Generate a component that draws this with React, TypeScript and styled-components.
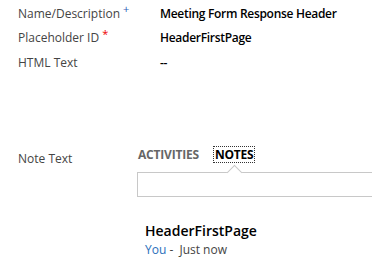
import React from "react";
import styled, { createGlobalStyle } from "styled-components";

const GlobalStyle = createGlobalStyle`
  html, body {
    margin: 0;
    padding: 0;
    background: #fff;
  }
  body {
    font-family: "Segoe UI", "Open Sans", "Liberation Sans", sans-serif;
    font-size: 12px;
    color: #444;
  }
`;

const fields = [
  { label: "Name/Description", mark: "+", value: "Meeting Form Response Header" },
  { label: "Placeholder ID", mark: "*", value: "HeaderFirstPage" },
  { label: "HTML Text", mark: "", value: "--" },
];

const App = () => {
  return (
    <Page>
      <GlobalStyle />
      <Fields>
        {fields.map((f) => (
          <Row key={f.label}>
            <Label>
              {f.label}
              {f.mark && <Mark required={f.mark === "*"}>{f.mark}</Mark>}
            </Label>
            <Value>{f.value}</Value>
          </Row>
        ))}
      </Fields>

      <NoteRow>
        <NoteLabel>Note Text</NoteLabel>
        <NotePanel>
          <Tabs>
            <Tab>ACTIVITIES</Tab>
            <Tab active>NOTES</Tab>
          </Tabs>
          <InputBox>
            <Notch />
          </InputBox>
          <NoteItem>
            <NoteTitle>HeaderFirstPage</NoteTitle>
            <NoteMeta>
              <Author>You</Author> - <span>Just now</span>
            </NoteMeta>
          </NoteItem>
        </NotePanel>
      </NoteRow>
    </Page>
  );
};

const Page = styled.div`
  width: 372px;
  height: 259px;
  overflow: hidden;
  padding: 1px 0 0 18px;
  box-sizing: border-box;
`;

const Fields = styled.div`
  display: flex;
  flex-direction: column;
`;

const Row = styled.div`
  display: flex;
  align-items: center;
  height: 24.5px;
`;

const Label = styled.div`
  width: 142px;
  flex-shrink: 0;
  color: #444;
  font-size: 12px;
  white-space: nowrap;
`;

const NoteLabel = styled(Label)`
  padding-top: 4px;
`;

const Mark = styled.sup<{ required?: boolean }>`
  color: ${(p) => (p.required ? "#e00" : "#2b5bb5")};
  font-size: 11px;
  margin-left: 3px;
  position: relative;
  top: ${(p) => (p.required ? "-1px" : "-2px")};
  vertical-align: top;
  line-height: 1;
`;

const Value = styled.div`
  font-weight: 600;
  color: #000;
  font-size: 12px;
  letter-spacing: -0.3px;
  white-space: nowrap;
`;

const NoteRow = styled.div`
  display: flex;
  margin-top: 71px;
`;

const NotePanel = styled.div`
  display: flex;
  flex-direction: column;
  flex: 1;
  margin-left: -23px;
`;

const Tabs = styled.div`
  display: flex;
  gap: 14px;
  height: 18px;
  align-items: center;
`;

const Tab = styled.div<{ active?: boolean }>`
  font-weight: 700;
  font-size: 12px;
  letter-spacing: -0.2px;
  color: ${(p) => (p.active ? "#000" : "#666")};
  outline: ${(p) => (p.active ? "1px dotted #333" : "none")};
  line-height: 15px;
  padding: 0 1px;
`;

const InputBox = styled.div`
  position: relative;
  margin-top: 8px;
  height: 23px;
  border: 1px solid #c8c8c8;
  border-right: none;
`;

const Notch = styled.div`
  position: absolute;
  left: 91px;
  top: -6px;
  width: 10px;
  height: 10px;
  background: #fff;
  border-left: 1px solid #c8c8c8;
  border-top: 1px solid #c8c8c8;
  transform: rotate(45deg);
`;

const NoteItem = styled.div`
  padding: 24px 0 0 8px;
`;

const NoteTitle = styled.div`
  font-size: 14px;
  font-weight: 600;
  color: #000;
  line-height: 19px;
`;

const NoteMeta = styled.div`
  font-size: 12px;
  color: #444;
  margin-top: 1px;
  span {
    margin-left: 3px;
  }
`;

const Author = styled.a`
  color: #2a6ebb;
`;

export default App;
